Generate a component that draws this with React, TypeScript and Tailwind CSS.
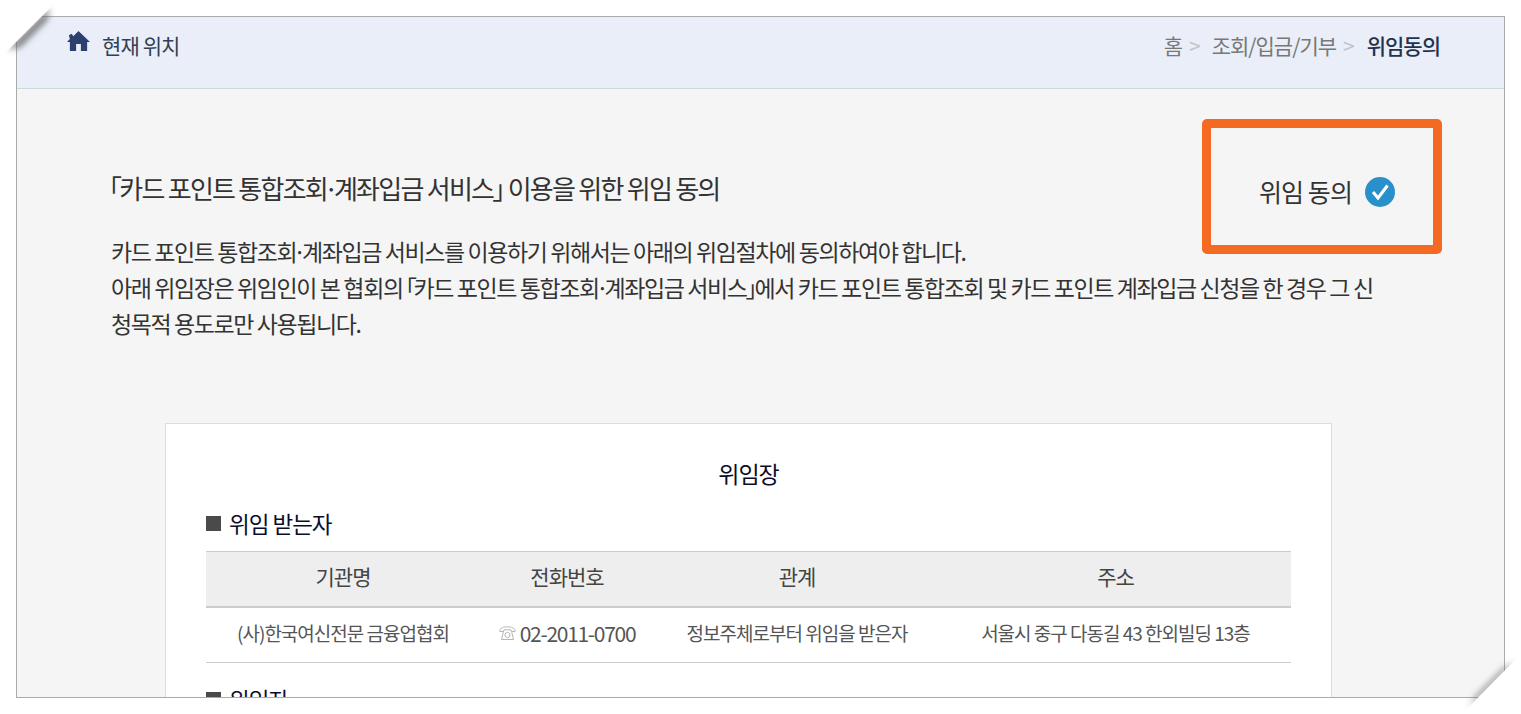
import React from 'react';

const fontStack = { fontFamily: '"Noto Sans CJK KR", "Noto Sans", sans-serif' };

const columns = [
  { head: '기관명', cell: '(사)한국여신전문 금융업협회' },
  { head: '전화번호', cell: '02-2011-0700', phone: true },
  { head: '관계', cell: '정보주체로부터 위임을 받은자' },
  { head: '주소', cell: '서울시 중구 다동길 43 한외빌딩 13층' },
];

const HomeIcon = () => (
  <svg width="23" height="22" viewBox="0 0 24 22" className="mb-[8px] shrink-0">
    <path d="M12 0.5 L24 12 L21 12 L21 21.5 L14.5 21.5 L14.5 14 L9.5 14 L9.5 21.5 L3 21.5 L3 12 L0 12 L3 9 L2 5 L5 3.5 L6.5 6 Z" fill="#2c4070" />
  </svg>
);

const CheckIcon = () => (
  <svg width="30" height="30" viewBox="0 0 30 30" className="mt-[3px] shrink-0">
    <circle cx="15" cy="15" r="15" fill="#2a90c9" />
    <path d="M8 15 L13 21 L22.5 8.5" fill="none" stroke="#ffffff" strokeWidth="3" />
  </svg>
);

const PhoneIcon = () => (
  <svg width="17" height="15" viewBox="0 0 17 15" className="shrink-0" fill="none" stroke="#b5b5b5" strokeWidth="1">
    <path d="M0.8 5.5 C0.8 1.5 5 0.8 8.5 0.8 C12 0.8 16.2 1.5 16.2 5.5 L12.5 5.5 L12 3.8 L5 3.8 L4.5 5.5 Z" />
    <path d="M4.5 5 L2.5 13.5 L14.5 13.5 L12.5 5" />
    <circle cx="8.5" cy="9" r="2.6" />
  </svg>
);

// the CJK middle dot is full width, the reference sets it tight
const Dot = () => <span className="mx-[-3px]">·</span>;

// paper fold that cuts across a corner of the capture
const CornerFold = ({ flip }: { flip?: boolean }) => (
  <svg
    width="60"
    height="60"
    viewBox="0 0 60 60"
    className={flip ? 'absolute left-[1461px] top-[654px]' : 'absolute left-0 top-0'}
  >
    <defs>
      <filter id={flip ? 'blurB' : 'blurA'} x="-30%" y="-30%" width="160%" height="160%">
        <feGaussianBlur stdDeviation="3" />
      </filter>
    </defs>
    {flip ? (
      <>
        <polygon points="54,7 8,53 15,42 42,15" fill="#666666" filter="url(#blurB)" />
        <polygon points="56,4 60,0 60,60 0,60 6,55" fill="#ffffff" />
      </>
    ) : (
      <>
        <polygon points="50,8 8,50 20,47 47,20" fill="#707070" filter="url(#blurA)" />
        <polygon points="0,0 60,0 53,5 5,53 0,60" fill="#ffffff" />
      </>
    )}
  </svg>
);

export default function App() {
  return (
    <div className="relative h-[714px] w-[1521px] overflow-hidden bg-white" style={fontStack}>
      <div className="mx-4 mt-4 h-[682px] overflow-hidden border border-[#aaaaaa] bg-[#f5f5f5]">
        <div className="flex h-[72px] items-start justify-between border-b border-[#c9d9dc] bg-[#e9eef8] pl-[50px] pr-[64px] pt-[13px]">
          <div className="flex items-center gap-[12px]">
            <HomeIcon />
            <span className="text-[21px] leading-[30px] tracking-[-0.9px] text-[#333f55]">현재 위치</span>
          </div>
          <div className="flex items-center text-[21px] leading-[30px] tracking-[-1px] text-[#777777]">
            <span>홈</span>
            <span className="ml-[7px] text-[#c4c4c4]">&gt;</span>
            <span className="ml-[12px]">조회/입금/기부</span>
            <span className="ml-[7px] text-[#c4c4c4]">&gt;</span>
            <span className="ml-[13px] font-medium text-[#1f3350]">위임동의</span>
          </div>
        </div>

        <div className="pl-[94px] pt-[81px]">
          <h2 className="-ml-[2px] text-[26px] font-normal leading-[36px] tracking-[-1.74px] text-[#333333]">
            <span className="mr-[-1px]">｢</span>카드 포인트 통합조회<Dot />계좌입금 서비스<span className="ml-[-1px]">｣</span> 이용을 위한 위임 동의
          </h2>
          <p className="mt-[27px] w-[1272px] text-[23px] leading-[36px] tracking-[-1.4px] text-[#333333]">
            카드 포인트 통합조회<Dot />계좌입금 서비스를 이용하기 위해서는 아래의 위임절차에 동의하여야 합니다.
            <br />
            아래 위임장은 위임인이 본 협회의<span className="ml-[-1px] mr-[-2px]"> ｢</span>카드 포인트 통합조회<Dot />계좌입금 서비스<span className="ml-[-1px] mr-[-1px]">｣</span>에서 카드 포인트 통합조회 및 카드 포인트 계좌입금 신청을 한 경우 그 신청목적 용도로만 사용됩니다.
          </p>
        </div>

        <div className="ml-[148px] mt-[82px] w-[1167px] border border-[#dddddd] bg-white px-10 pt-[31px]">
          <h3 className="text-center text-[23px] font-normal leading-[36px] tracking-[-1px] text-[#0b0b2a]">위임장</h3>
          <div className="mt-[14px] flex items-center gap-2">
            <span className="h-[15px] w-[15px] bg-[#4a4a4a]" />
            <span className="text-[22.5px] leading-[36px] tracking-[-1px] text-[#0b0b2a]">위임 받는자</span>
          </div>
          <div className="mt-[10px] grid grid-cols-[274px_174px_286px_351px]">
            {columns.map((c) => (
              <div
                key={c.head}
                className="flex h-[57px] items-center justify-center border-b-[2px] border-t border-b-[#cccccc] border-t-[#cccccc] bg-[#eeeeee] pb-[5px] text-[21px] tracking-[-1px] text-[#444444]"
              >
                {c.head}
              </div>
            ))}
            {columns.map((c) => (
              <div
                key={c.cell}
                className={
                  c.phone
                    ? 'flex h-[55px] items-center justify-center gap-[4px] border-b border-[#cccccc] pb-[3px] text-[21px] tracking-[-1.3px] text-[#555555]'
                    : 'flex h-[55px] items-center justify-center border-b border-[#cccccc] pb-[3px] text-[19px] tracking-[-1px] text-[#555555]'
                }
              >
                {c.phone && <PhoneIcon />}
                {c.cell}
              </div>
            ))}
          </div>
          <div className="mt-[18px] flex items-center gap-2">
            <span className="h-[15px] w-[15px] bg-[#4a4a4a]" />
            <span className="text-[22.5px] leading-[36px] tracking-[-1px] text-[#0b0b2a]">위임자</span>
          </div>
        </div>
      </div>

      {/* annotation drawn over the capture */}
      <div className="absolute left-[1202px] top-[119px] flex h-[135px] w-[240px] items-center justify-center gap-[13px] rounded-[5px] border-[9px] border-[#f56a22] pl-[10px] pt-[8px]">
        <span className="text-[25px] leading-[36px] tracking-[-0.9px] text-[#333333]">위임 동의</span>
        <CheckIcon />
      </div>

      <CornerFold />
      <CornerFold flip />
    </div>
  );
}
